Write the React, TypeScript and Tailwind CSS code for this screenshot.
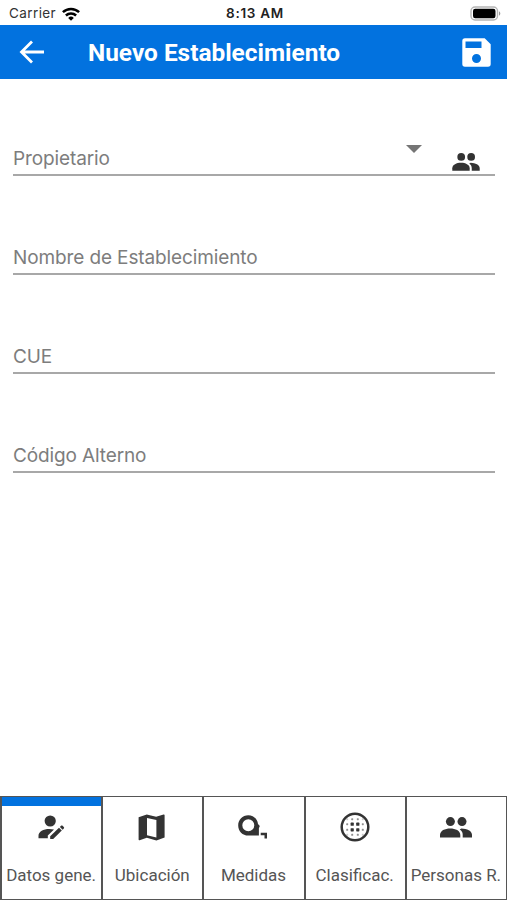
import type { ReactNode } from "react";

function PeopleIcon({ className }: { className?: string }) {
  return (
    <svg viewBox="0 0 32 21" fill="currentColor" className={className}>
      <circle cx="10.4" cy="4.6" r="4.5" />
      <circle cx="22" cy="4.6" r="4.5" />
      <path d="M0 20.6v-2.7c0-4.2 5-6.4 10.2-6.4s10.1 2.2 10.1 6.4v2.7z" />
      <path d="M21.4 11.5c5.6.2 10.6 2.3 10.6 6.3v2.8h-9.3v-2.8c0-2.6-1-4.3-3-5.4l1.7-.9z" />
    </svg>
  );
}

function WifiIcon() {
  return (
    <svg viewBox="0 0 18 14" className="h-[14px] w-[18px]" fill="none" stroke="#000" strokeWidth="2.5">
      <path d="M.9 5.2a11.8 11.8 0 0 1 16.2 0" />
      <path d="M3.9 8.5a7.4 7.4 0 0 1 10.2 0" />
      <path d="M9 13.7 6.2 10.9a4 4 0 0 1 5.6 0z" fill="#000" stroke="none" />
    </svg>
  );
}

function BatteryIcon() {
  return (
    <svg viewBox="0 0 31 15" className="h-[15px] w-[31px]">
      <rect x="1" y="1" width="26.5" height="13" rx="4" fill="#fff" stroke="#b5b5b5" strokeWidth="1.4" />
      <rect x="3" y="2.8" width="22.5" height="9.4" rx="2.2" fill="#000" />
      <path d="M29 5.3c1.8.7 1.8 3.7 0 4.4z" fill="#999" />
    </svg>
  );
}

function PersonEditIcon() {
  return (
    <svg viewBox="0 0 27 26" fill="currentColor" className="h-[26px] w-[27px]">
      <circle cx="12.2" cy="7" r="5.6" />
      <path d="M.5 24.2v-2.4c0-4.3 5-6.8 10.700-6.800 1.800 0 3.300.200 4.800.600L9.800 21.600v2.600z" />
      <path d="M12.200 22.300 21 13.800l2.800 2.800-8.600 8.500h-3z" />
      <path d="m21.900 12.900 1.100-1.100c.5-.5 1.100-.5 1.600 0l1.200 1.200c.5.5.5 1 0 1.500l-1.100 1.200z" />
    </svg>
  );
}

function MapIcon() {
  return (
    <svg viewBox="0 0 27 27" className="mr-[2px] h-[27px] w-[27px]">
      <path
        fill="currentColor"
        fillRule="evenodd"
        d="M.6 3.200 8.800.600l9.300 2.200 7.500-2.200c.6-.2 1 0 1 .7v22.200l-8.200 2.900-9.600-2.600-7.200 2.400c-.6.2-1 0-1-.7zM9 4v17.200l9.400 2.200V6.100z"
      />
    </svg>
  );
}

function TapeIcon() {
  return (
    <svg viewBox="0 0 30 24" fill="currentColor" className="mr-[2px] h-[24px] w-[30px]">
      <path
        fillRule="evenodd"
        d="M10.3.2c5.200 0 9.100 3.700 9.700 8.700l1.800 2-.9 2.300v7.300H10.300C4.500 20.500.2 16.100.2 10.400.2 4.700 4.500.2 10.300.2zM10.300 4.300a6 6 0 1 0 0 12 6 6 0 1 0 0-12z"
      />
      <path d="M22.700 17.800h6.300v5.800h-2.500v-3.300h-3.800z" />
    </svg>
  );
}

function GridCircleIcon() {
  const dots = [7.2, 12.2, 17.8, 22.8];
  const isInner = (n: number) => n > 10 && n < 20;
  return (
    <svg viewBox="0 0 30 30" fill="currentColor" className="h-[30px] w-[30px]">
      <circle cx="15" cy="15" r="13.3" fill="none" stroke="currentColor" strokeWidth="2.5" />
      {dots.map((x) =>
        dots.map((y) => {
          const both = isInner(x) && isInner(y);
          const one = isInner(x) || isInner(y);
          const r = both ? 1.6 : 1;
          return (
            <rect
              key={`${x}-${y}`}
              x={x - r}
              y={y - r}
              width={r * 2}
              height={r * 2}
              rx=".6"
              opacity={both ? 1 : one ? 0.55 : 0.25}
            />
          );
        })
      )}
    </svg>
  );
}

type FieldProps = { label: string; children?: ReactNode };

function Field({ label, children }: FieldProps) {
  return (
    <div className="flex h-[39px] items-start justify-between border-b-2 border-[#a8a8a8]">
      <span className="mt-[10px] text-[19px] leading-6 tracking-[-0.12px] text-[#7d7d7d]">{label}</span>
      {children}
    </div>
  );
}

const tabs = [
  { label: "Datos gene.", icon: <PersonEditIcon />, active: true },
  { label: "Ubicación", icon: <MapIcon /> },
  { label: "Medidas", icon: <TapeIcon /> },
  { label: "Clasificac.", icon: <GridCircleIcon /> },
  { label: "Personas R.", icon: <PeopleIcon className="h-[21px] w-8" /> },
];

export default function App() {
  return (
    <div className="flex h-screen w-full flex-col overflow-hidden bg-white font-['Inter',sans-serif]">
      {/* Status bar */}
      <div className="grid h-[25px] shrink-0 grid-cols-3 items-center pt-[2px] pr-[6px] pl-[9px] text-[13.5px]">
        <div className="flex items-center gap-[6px] tracking-[0.4px] text-[#333]">
          <span>Carrier</span>
          <WifiIcon />
        </div>
        <span className="text-center font-semibold tracking-[0.7px] text-[#222]">8:13 AM</span>
        <div className="flex justify-end">
          <BatteryIcon />
        </div>
      </div>

      {/* Toolbar */}
      <header className="flex h-[54px] shrink-0 items-center bg-[#0272df] pr-[16px] pl-[19px] text-white">
        <button aria-label="Volver">
          <svg viewBox="0 0 26 24" className="h-6 w-[26px]" fill="none" stroke="currentColor" strokeWidth="2.8">
            <path d="M25 12H3M13 1.500 2.500 12 13 22.500" />
          </svg>
        </button>
        <h1 className="mt-[2px] ml-[43px] flex-1 font-['Roboto',sans-serif] text-[24.4px] font-bold whitespace-nowrap">
          Nuevo Establecimiento
        </h1>
        <button aria-label="Guardar">
          <svg viewBox="0 0 29 29" className="h-[29px] w-[29px]" fill="currentColor">
            <path
              fillRule="evenodd"
              d="M3 .3h19.700l6 6V26a2.700 2.700 0 0 1-2.700 2.700H3A2.700 2.700 0 0 1 .3 26V3A2.700 2.700 0 0 1 3 .3zM3.500 3.500v6.500h16V3.500zM14.500 16a4.500 4.500 0 1 0 0 9 4.500 4.500 0 1 0 0-9z"
            />
          </svg>
        </button>
      </header>

      {/* Form */}
      <main className="flex flex-1 flex-col gap-[60px] pt-[58px] pr-[12px] pl-[13px]">
        <Field label="Propietario">
          <div className="flex items-start">
            <svg viewBox="0 0 16 8" className="mt-[8px] h-2 w-4" fill="#757575">
              <path d="M0 0h16L8 8z" />
            </svg>
            <PeopleIcon className="mt-[16px] mr-[15px] ml-[30px] h-[18px] w-[28px] text-[#333]" />
          </div>
        </Field>
        <Field label="Nombre de Establecimiento" />
        <Field label="CUE" />
        <Field label="Código Alterno" />
      </main>

      {/* Bottom tabs */}
      <nav className="grid h-[104px] shrink-0 grid-cols-5 border-l border-[#555] font-['Roboto',sans-serif] text-[#333]">
        {tabs.map((tab) => (
          <button key={tab.label} className="flex flex-col items-center border border-[#555] first:border-l">
            <span className={`h-[9px] w-full shrink-0 ${tab.active ? "bg-[#0272df]" : ""}`} />
            <span className="flex h-[42px] items-center justify-center">{tab.icon}</span>
            <span className="mt-[15px] mr-px text-[17px] leading-6 whitespace-nowrap text-[#555]">{tab.label}</span>
          </button>
        ))}
      </nav>
    </div>
  );
}
